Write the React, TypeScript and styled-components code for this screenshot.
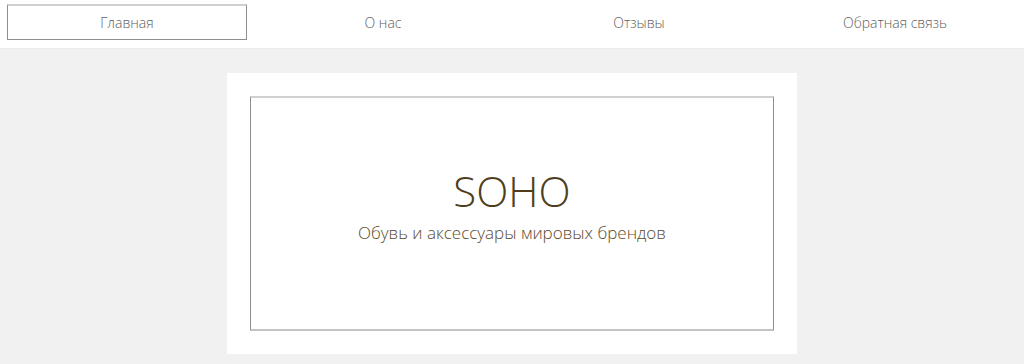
import { createGlobalStyle, styled } from 'styled-components';

const GlobalStyle = createGlobalStyle`
  * {
    box-sizing: border-box;
  }

  body {
    margin: 0;
    background-color: #f1f1f1;
    font-family: 'Open Sans', 'Liberation Sans', sans-serif;
    font-weight: 300;
  }
`;

const NAV_ITEMS = ['Главная', 'О нас', 'Отзывы', 'Обратная связь'];

const App = () => {
  return (
    <>
      <GlobalStyle />
      <Nav>
        {NAV_ITEMS.map((item, i) => (
          <NavItem key={item} $active={i === 0}>
            {item}
          </NavItem>
        ))}
      </Nav>
      <Main>
        <Card>
          <Frame>
            <Title>SOHO</Title>
            <Subtitle>Обувь и аксессуары мировых брендов</Subtitle>
          </Frame>
        </Card>
      </Main>
    </>
  );
};

export default App;

const Nav = styled.nav`
  display: grid;
  grid-template-columns: repeat(4, 1fr);

  height: 49px;

  padding: 4px 0 8px;

  background-color: #fff;
  border-bottom: 1px solid #ececec;
`;

const NavItem = styled.a<{ $active?: boolean }>`
  display: flex;
  align-items: center;
  justify-content: center;

  margin: 0 9px 0 7px;

  color: #5e5e5e;
  font-size: 14px;

  border: 1px solid ${({ $active }) => ($active ? '#8e8e8e' : 'transparent')};
  border-top: 2px solid ${({ $active }) => ($active ? '#d0d0d0' : 'transparent')};
  cursor: pointer;
`;

const Main = styled.main`
  display: flex;
  justify-content: center;

  padding-top: 24px;
`;

const Card = styled.section`
  width: 570px;
  height: 281px;

  padding: 23px;

  background-color: #fff;
`;

const Frame = styled.div`
  display: flex;
  flex-direction: column;
  align-items: center;
  justify-content: center;

  height: 100%;

  padding-bottom: 18px;

  border: 1px solid #8e8e8e;
  border-top: 2px solid #d0d0d0;
  border-bottom: 2px solid #c4c4c4;
`;

const Title = styled.h1`
  margin: 0;

  color: #4f3d1c;
  font-size: 42px;
  font-weight: 300;
  line-height: 52px;
`;

const Subtitle = styled.p`
  margin: 4px 0 0;

  color: #5c4a2c;
  font-size: 17px;
  line-height: 24px;
`;
